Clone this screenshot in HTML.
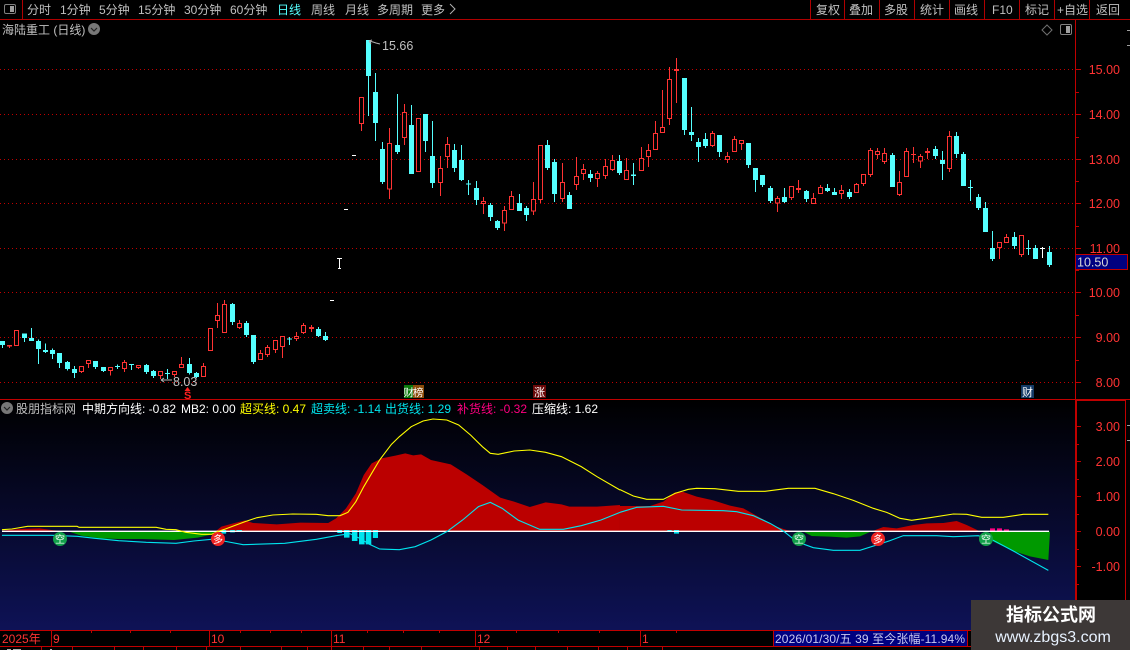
<!DOCTYPE html>
<html><head><meta charset="utf-8"><title>海陆重工</title>
<style>
html,body{margin:0;padding:0;background:#000;width:1130px;height:650px;overflow:hidden}
svg{display:block}
text{font-family:"Liberation Sans","Noto Sans CJK SC",sans-serif;font-size:12px;fill:#c0c0c0}
.r text{fill:#ff3333;font-size:12.5px;text-anchor:end}
.w{fill:none;stroke-width:3}
.cw{stroke:#55ffff}
.cb{fill:none;stroke:#55ffff;stroke-width:15}
.rw{stroke:#ff3333}
.rb{fill:#000;stroke:#ff3333;stroke-width:3}
.l{fill:none;vector-effect:non-scaling-stroke;stroke-width:1.1}
</style></head><body>
<svg width="1130" height="650" viewBox="0 0 1130 650" xmlns="http://www.w3.org/2000/svg">
<defs><linearGradient id="g" x1="0" y1="0" x2="0" y2="1"><stop offset="0" stop-color="#000"/><stop offset="1" stop-color="#0e1256"/></linearGradient></defs>
<rect width="1130" height="650" fill="#000"/>

<!-- toolbar -->
<path d="M0 19.5H1130M22.5 0V19M810.5 0V19M844.5 0V19M879.5 0V19M914.5 0V19M949.5 0V19M984.5 0V19M1019.5 0V19M1054.5 0V19M1089.5 0V19" stroke="#b00000" fill="none" shape-rendering="crispEdges"/>
<rect x="4.5" y="4.5" width="11" height="9" rx="1.5" fill="none" stroke="#808080"/><rect x="10" y="6" width="4" height="6" fill="#a0a0a0"/>
<text x="27" y="14">分时</text><text x="60" y="14">1分钟</text><text x="99" y="14">5分钟</text><text x="138" y="14">15分钟</text><text x="184" y="14">30分钟</text><text x="230" y="14">60分钟</text>
<text x="277" y="14" style="fill:#55ffff">日线</text><text x="311" y="14">周线</text><text x="345" y="14">月线</text><text x="377" y="14">多周期</text><text x="421" y="14">更多</text>
<path d="M450 4l5 5-5 5" fill="none" stroke="#b0b0b0"/>
<text x="816" y="14">复权</text><text x="849" y="14">叠加</text><text x="884" y="14">多股</text><text x="920" y="14">统计</text><text x="954" y="14">画线</text><text x="992" y="14">F10</text><text x="1025" y="14">标记</text><text x="1057" y="14">+自选</text><text x="1096" y="14">返回</text>

<!-- title -->
<text x="2" y="34">海陆重工 (日线)</text>
<circle cx="94" cy="29" r="6" fill="#777"/><path d="M91 28l3 3 3-3" fill="none" stroke="#222" stroke-width="1.2"/>
<path d="M1047 25l5 5-5 5-5-5z" fill="none" stroke="#707070"/>
<rect x="1060.5" y="24.5" width="11" height="10" rx="1.5" fill="none" stroke="#808080"/><rect x="1066" y="26" width="4" height="7" fill="#a0a0a0"/>

<!-- grid -->
<path d="M0 69.5H1075M0 114.5H1075M0 159.5H1075M0 203.5H1075M0 248.5H1075M0 292.5H1075M0 337.5H1075M0 382.5H1075" stroke="#c00000" stroke-dasharray="1 3" fill="none" shape-rendering="crispEdges"/>

<!-- candles A -->
<g transform="translate(0,280) scale(.33333)" shape-rendering="crispEdges">
<path class="w cw" d="M7.5 183V204M73.5 160V186M94.5 144V183M115.5 178V252M136.5 190V219M157.5 206V237M178.5 219V264M202.5 243V272M223.5 258V294M286.5 243V267M310.5 261V276M352.5 254V267M394.5 253V270M439.5 252V282M460.5 270V294M502.5 267V297M568.5 234V283M589.5 276V294M697.5 69V135M739.5 123V171M760.5 165V252M868.5 171V195M955.5 141V171M976.5 156V183"/>
<path class="cb" d="M7.5 183V195M73.5 160V174M94.5 174V183M115.5 183V207M136.5 210V216M157.5 210V222M178.5 219V249M202.5 246V267M223.5 267V279M286.5 243V261M310.5 261V273M352.5 258V261M394.5 252V255M439.5 255V276M460.5 273V288M502.5 279V282M568.5 252V279M589.5 279V291M697.5 72V126M739.5 129V165M760.5 165V246M868.5 176V179M955.5 147V168M976.5 168V180"/>
<path class="w rw" d="M28.5 195V204M244.5 259V279M265.5 240V264M331.5 262V286M373.5 240V276M415.5 256V267M481.5 274V297M523.5 274V291M544.5 231V263M610.5 249V290M652.5 69V144M673.5 60V158M718.5 120V147M781.5 210V240M802.5 195V231M826.5 180V219M847.5 169V234M889.5 156V183M910.5 129V162M934.5 135V156"/>
<path class="rb" d="M22.5 196h12V198h-12zM43.5 152h12V196h-12zM238.5 260h12V275h-12zM259.5 241h12V250h-12zM325.5 263h12V272h-12zM367.5 247h12V266h-12zM409.5 257h12V263h-12zM475.5 275h12V287h-12zM517.5 275h12V284h-12zM538.5 253h12V262h-12zM604.5 260h12V290h-12zM625.5 146h12V211h-12zM646.5 106h12V121h-12zM667.5 73h12V157h-12zM712.5 130h12V143h-12zM775.5 220h12V239h-12zM796.5 202h12V223h-12zM820.5 181h12V209h-12zM841.5 170h12V200h-12zM883.5 170h12V175h-12zM904.5 136h12V158h-12zM928.5 142h12V146h-12z"/>
</g>
<!-- candles B -->
<g transform="translate(340,30) scale(.33333)" shape-rendering="crispEdges">
<path class="w cw" d="M85.5 30V258M106.5 129V333M127.5 336V462M172.5 192V372M214.5 225V432M256.5 252V366M277.5 273V474M343.5 342V426M364.5 345V453M385.5 450V495M409.5 453V525M451.5 519V573M472.5 570V600M538.5 492V543M559.5 528V573M622.5 330V420M643.5 387V516M688.5 486V537M751.5 420V456M838.5 375V435M880.5 399V465M1033.5 144V315M1054.5 231V333M1075.5 324V396"/>
<path class="cb" d="M85.5 30V138M106.5 186V279M127.5 357V456M172.5 345V366M214.5 285V432M256.5 252V333M277.5 378V459M343.5 360V414M364.5 390V450M385.5 461V464M409.5 474V510M451.5 525V561M472.5 573V594M538.5 519V543M559.5 534V555M622.5 345V414M643.5 396V492M688.5 495V537M751.5 432V444M838.5 393V429M880.5 433V438M1033.5 144V300M1054.5 306V315M1075.5 336V351"/>
<path class="w rw" d="M64.5 202V303M148.5 294V507M193.5 222V345M301.5 378V498M322.5 321V414M430.5 501V552M493.5 528V603M514.5 483V539M580.5 456V555M601.5 346V519M667.5 399V516M709.5 381V480M730.5 402V450M772.5 423V471M796.5 387V447M817.5 375V423M859.5 384V449M904.5 351V422M925.5 342V411M946.5 273V359M967.5 180V308M988.5 111V285M1009.5 84V219"/>
<path class="rb" d="M58.5 203h12V280h-12zM142.5 341h12V477h-12zM187.5 248h12V322h-12zM229.5 266h12V424h-12zM295.5 416h12V457h-12zM316.5 344h12V379h-12zM424.5 515h12V520h-12zM487.5 542h12V579h-12zM508.5 500h12V538h-12zM574.5 509h12V543h-12zM595.5 347h12V509h-12zM661.5 458h12V505h-12zM703.5 440h12V463h-12zM724.5 419h12V430h-12zM766.5 431h12V445h-12zM790.5 410h12V436h-12zM811.5 392h12V418h-12zM853.5 422h12V448h-12zM898.5 386h12V421h-12zM919.5 362h12V379h-12zM940.5 311h12V358h-12zM961.5 293h12V307h-12zM982.5 149h12V265h-12zM1003.5 118h12V122h-12z"/>
</g>
<!-- candles C -->
<g transform="translate(640,50) scale(.33333)" shape-rendering="crispEdges">
<path class="w cw" d="M196.5 249V294M238.5 255V321M325.5 279V354M346.5 354V426M367.5 375V411M391.5 408V459M433.5 414V459M499.5 420V456M562.5 402V426M583.5 414V435M628.5 417V447M757.5 309V411M886.5 288V327M907.5 303V390M949.5 246V324M970.5 306V408M991.5 390V453M1015.5 432V480M1036.5 456V546M1057.5 543V633M1123.5 546V597M1165.5 570V615M1186.5 585V627M1228.5 588V651"/>
<path class="cb" d="M196.5 267V288M238.5 255V306M325.5 279V345M346.5 354V390M367.5 375V405M391.5 414V453M433.5 441V456M499.5 423V447M562.5 414V423M583.5 426V435M628.5 426V441M757.5 315V411M886.5 297V318M907.5 330V342M949.5 258V312M970.5 312V408M991.5 411V414M1015.5 441V474M1036.5 474V546M1057.5 594V627M1123.5 561V588M1165.5 594V597M1186.5 594V627M1228.5 606V645"/>
<path class="w rw" d="M217.5 243V291M262.5 306V339M283.5 258V305M304.5 271V300M412.5 438V486M454.5 408V450M475.5 390V429M520.5 429V461M541.5 405V431M604.5 405V447M649.5 399V428M670.5 373V408M691.5 294V381M712.5 294V327M733.5 294V342M778.5 363V438M799.5 294V380M820.5 291V339M841.5 312V354M862.5 294V327M928.5 243V366M1078.5 577V627M1099.5 552V578M1144.5 556V621"/>
<path class="rb" d="M211.5 251h12V287h-12zM256.5 319h12V328h-12zM277.5 268h12V304h-12zM298.5 272h12V280h-12zM406.5 446h12V459h-12zM448.5 409h12V442h-12zM469.5 416h12V419h-12zM514.5 446h12V460h-12zM535.5 413h12V430h-12zM598.5 421h12V430h-12zM643.5 404h12V427h-12zM664.5 374h12V401h-12zM685.5 301h12V374h-12zM706.5 305h12V314h-12zM727.5 311h12V334h-12zM772.5 398h12V433h-12zM793.5 305h12V379h-12zM814.5 313h12V314h-12zM835.5 320h12V333h-12zM856.5 305h12V308h-12zM922.5 260h12V355h-12zM1072.5 578h12V593h-12zM1093.5 563h12V577h-12zM1138.5 557h12V613h-12z"/>
<path d="M1207.5 591V624M1200 595.5H1215" stroke="#fff" stroke-width="3" fill="none"/>
</g>
<!-- isolated dashes -->
<path d="M330 300.5h4M344 209.5h4M352 155.5h4M339.5 258V269M337 258.5h5M338 268.5h3" stroke="#fff" fill="none" shape-rendering="crispEdges"/>

<!-- high low labels -->
<path d="M369 41l4 1 3 1 4 1M369 41l3-1M369 41l2 3" stroke="#b0b0b0" fill="none"/>
<text x="382" y="50" style="font-size:12.5px">15.66</text>
<path d="M161 380H172M161 380l3-2M161 380l3 2" stroke="#b0b0b0" fill="none"/>
<text x="173" y="386" style="font-size:12.5px">8.03</text>
<path d="M187.5 387l3 4h-6z" fill="#ff2020"/>
<text x="184" y="399" style="fill:#ff2020;font-size:11px;font-weight:bold">S</text>

<!-- event tags -->
<rect x="404" y="385" width="9" height="13" fill="#0a7a0a"/><rect x="413" y="385" width="11" height="13" fill="#8a4a08"/>
<text x="403.5" y="396" style="fill:#fff;font-size:10.5px">财</text><text x="413" y="396" style="fill:#fff;font-size:10.5px">榜</text>
<rect x="533" y="385" width="13" height="13" fill="#6a0808"/><text x="534" y="396" style="fill:#fff;font-size:11px">涨</text>
<rect x="1021" y="385" width="13" height="13" fill="#143a66"/><text x="1022" y="396" style="fill:#fff;font-size:11px">财</text>

<!-- indicator panel -->
<rect x="0" y="400" width="1075" height="230" fill="url(#g)"/>
<path d="M0 399.5H1130" stroke="#c00000" shape-rendering="crispEdges"/>
<g transform="translate(0,395) scale(.3954,.33333)">
<path fill="#bb0000" d="M5 409V407L50 402 100 400 130 405 160 409ZM545 409 560 395 590 385 620 376 640 384 700 388 760 383 830 384 850 370 875 340 900 295 920 240 940 205 965 190 1000 182 1025 175 1045 181 1065 178 1090 195 1140 208 1180 238 1220 270 1265 308 1300 320 1340 336 1380 322 1420 328 1440 335 1510 335 1568 330V409Z"/>
<path fill="#009900" d="M175 410 205 422 255 430 300 432 360 432 440 435 500 428 530 420 545 410Z"/>
<path fill="#00e5ee" d="M853 405h12v9h-12zM870 405h14v23h-14zM890 405h14v33h-14zM908 405h14v43h-14zM925 405h14v43h-14zM943 405h13v24h-13zM560 405h12v11h-12zM582 405h12v7h-12zM598 405h14v4h-14z"/>
</g>
<g transform="translate(620,395) scale(.33333)">
<path fill="#bb0000" d="M0 409V333L90 333 130 320 165 292 190 291 230 305 280 316 330 332 370 340 420 368 470 395 500 405 525 409ZM755 409 790 396 830 400 880 390 920 385 970 384 1010 378 1040 390 1080 409Z"/>
<path fill="#009900" d="M550 410 575 423 630 425 680 428 720 424 750 411ZM1110 410 1120 440 1180 468 1230 484 1285 495 1290 410Z"/>
<path fill="#00e5ee" d="M142 405h13v4h-13zM162 405h15v11h-15z"/>
<path fill="#ff0080" d="M1110 400h15v9h-15zM1131 400h15v9h-15zM1152 403h15v6h-15z"/>
</g>
<path d="M2 531.3H1049" stroke="#fff" stroke-width="1.3" fill="none"/>
<g transform="translate(0,395) scale(.3954,.33333)">
<path class="l" stroke="#00e5ee" d="M5 421 130 421 195 424 240 430 300 437 370 442 445 445 490 438 535 433 565 438 615 449 720 445 800 433 850 422 885 416 910 430 935 448 960 462 1010 464 1050 455 1090 435 1130 410 1170 375 1210 335 1240 322 1270 340 1310 375 1365 403 1425 403 1470 392 1520 375 1568 352"/>
<path class="l" stroke="#ffff00" d="M5 404 30 402 70 394 130 394 195 394 200 397 300 397 395 397 420 403 445 404 470 412 510 418 535 418 550 410 570 402 620 380 650 368 690 360 740 357 800 358 830 362 860 362 880 352 900 320 920 275 940 235 960 195 990 148 1010 125 1040 95 1070 78 1095 72 1130 75 1160 90 1190 120 1220 155 1240 175 1260 178 1300 168 1340 165 1380 172 1420 185 1470 215 1510 245 1568 285"/>
</g>
<g transform="translate(620,395) scale(.33333)">
<path class="l" stroke="#00e5ee" d="M0 352 50 337 130 334 185 345 310 347 350 350 400 362 450 385 490 408 530 440 580 458 640 466 720 466 770 450 810 437 850 422 950 422 1000 425 1075 422 1120 436 1180 468 1285 526"/>
<path class="l" stroke="#ffff00" d="M0 284 40 303 80 313 130 313 165 295 205 283 230 280 285 281 355 289 435 289 505 280 585 280 640 296 700 316 760 340 800 352 840 370 875 376 930 368 1000 357 1040 358 1085 367 1150 367 1210 358 1285 358"/>
</g>

<!-- badges -->
<circle cx="60" cy="539" r="7" fill="#12a04a"/><text x="55" y="543" style="fill:#fff;font-size:10px">空</text>
<circle cx="218" cy="539" r="7" fill="#ee2222"/><text x="213" y="543" style="fill:#fff;font-size:10px">多</text>
<circle cx="799" cy="539" r="7" fill="#12a04a"/><text x="794" y="543" style="fill:#fff;font-size:10px">空</text>
<circle cx="878" cy="539" r="7" fill="#ee2222"/><text x="873" y="543" style="fill:#fff;font-size:10px">多</text>
<circle cx="986" cy="539" r="7" fill="#12a04a"/><text x="981" y="543" style="fill:#fff;font-size:10px">空</text>

<!-- legend -->
<circle cx="7" cy="408" r="6" fill="#777"/><path d="M4 407l3 3 3-3" fill="none" stroke="#222" stroke-width="1.2"/>
<text x="16" y="413">股朋指标网</text>
<text x="82" y="413" style="fill:#fff">中期方向线: -0.82</text>
<text x="181" y="413" style="fill:#fff">MB2: 0.00</text>
<text x="240" y="413" style="fill:#ffff00">超买线: 0.47</text>
<text x="311" y="413" style="fill:#00e5ee">超卖线: -1.14</text>
<text x="385" y="413" style="fill:#00e5ee">出货线: 1.29</text>
<text x="457" y="413" style="fill:#ff0080">补货线: -0.32</text>
<text x="532" y="413" style="fill:#fff">压缩线: 1.62</text>

<!-- right axis -->
<rect x="1076" y="400" width="54" height="230" fill="#000"/>
<path d="M1075.5 20V630M1076.5 400V630M1125.5 400V630M1076 400.5H1126" stroke="#c00000" fill="none" shape-rendering="crispEdges"/>
<path d="M1076 69.5h5M1076 92.5h3M1076 114.5h5M1076 137.5h3M1076 159.5h5M1076 181.5h3M1076 203.5h5M1076 226.5h3M1076 248.5h5M1076 270.5h3M1076 292.5h5M1076 315.5h3M1076 337.5h5M1076 360.5h3M1076 382.5h5M1076 426.5h5M1076 444.5h3M1076 461.5h5M1076 479.5h3M1076 496.5h5M1076 514.5h3M1076 531.5h5M1076 549.5h3M1076 566.5h5M1076 584.5h3" stroke="#c00000" fill="none" shape-rendering="crispEdges"/>
<path d="M1127 30.5h3M1127 45.5h3M1127 440.5h3M1127 425.5h3" stroke="#a0a0a0" fill="none" shape-rendering="crispEdges"/>
<g class="r">
<text x="1120" y="74">15.00</text><text x="1120" y="119">14.00</text><text x="1120" y="164">13.00</text><text x="1120" y="208">12.00</text><text x="1120" y="253">11.00</text><text x="1120" y="297">10.00</text><text x="1120" y="342">9.00</text><text x="1120" y="387">8.00</text>
<text x="1120" y="431">3.00</text><text x="1120" y="466">2.00</text><text x="1120" y="501">1.00</text><text x="1120" y="536">0.00</text><text x="1120" y="571">-1.00</text>
</g>
<rect x="1075.5" y="254.5" width="52" height="15" fill="#000080" stroke="#c00000"/>
<text x="1077" y="266.5" style="fill:#d8d8d8;font-size:12.5px">10.50</text>

<!-- bottom bar -->
<rect x="0" y="631" width="1075" height="19" fill="#000"/>
<path d="M0 630.5H1130M0 646.5H971M51.5 631V646M209.5 631V646M331.5 631V646M475.5 631V646M640.5 631V646M91.5 631v2M130.5 631v2M170.5 631v2M240.5 631v2M270.5 631v2M301.5 631v2M367.5 631v2M403.5 631v2M439.5 631v2M516.5 631v2M558.5 631v2M599.5 631v2M676.5 631v2M41.5 647v3M72.5 647v3M114.5 647v3M143.5 647v3M176.5 647v3M206.5 647v3M240.5 647v3M281.5 647v3M307.5 647v3M331.5 647v3M363.5 647v3M389.5 647v3M421.5 647v3M479.5 647v3M507.5 647v3M535.5 647v3M567.5 647v3M598.5 647v3M627.5 647v3M662.5 647v3" stroke="#c00000" fill="none" shape-rendering="crispEdges"/>
<path d="M7 649.5h4M13 649.5h8M50 649.5h2" stroke="#b0b0b0" fill="none" shape-rendering="crispEdges"/>
<text x="2" y="643" style="fill:#ff3333">2025年</text><text x="53" y="643" style="fill:#ff3333">9</text><text x="211" y="643" style="fill:#ff3333">10</text><text x="333" y="643" style="fill:#ff3333">11</text><text x="477" y="643" style="fill:#ff3333">12</text><text x="642" y="643" style="fill:#ff3333">1</text>
<rect x="773.5" y="630.5" width="194" height="16" fill="#000080" stroke="#c00000"/>
<text x="775" y="643" style="fill:#c8c8f0;font-size:12px" textLength="190">2026/01/30/五 39 至今张幅-11.94%</text>

<!-- watermark -->
<rect x="971" y="600" width="159" height="50" fill="#3d3837"/>
<text x="1051" y="621" text-anchor="middle" style="fill:#fff;font-size:18px;font-weight:bold">指标公式网</text>
<text x="1053" y="642" text-anchor="middle" style="fill:#e8f2ff;font-size:16px">www.zbgs3.com</text>
</svg>
</body></html>
